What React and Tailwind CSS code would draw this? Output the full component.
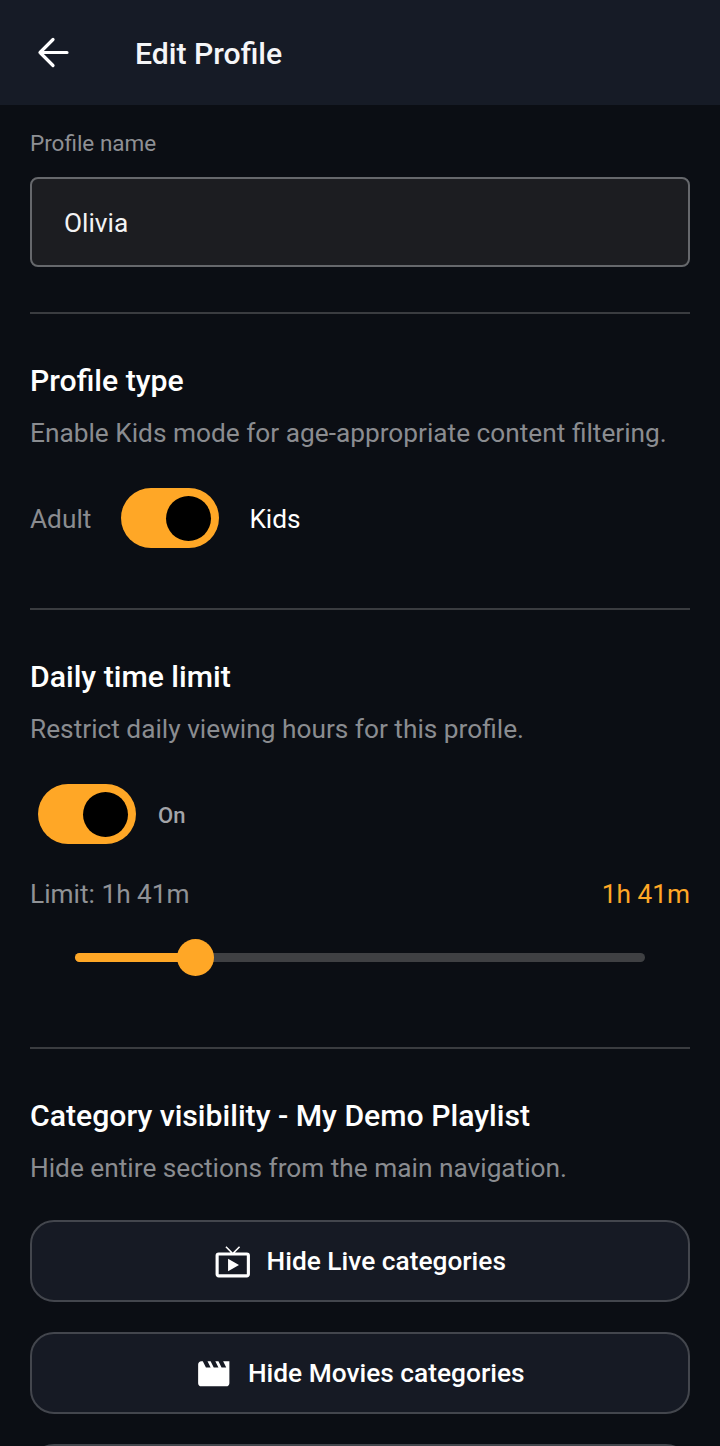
import { MdLiveTv, MdMovie } from "react-icons/md";

function Toggle() {
  return (
    <div className="flex h-[60px] w-[98px] items-center justify-end rounded-full bg-[#ffa726] pr-[8px]">
      <div className="h-[45px] w-[45px] rounded-full bg-black" />
    </div>
  );
}

function Divider() {
  return <div className="h-[2px] bg-[#3a3c40]" />;
}

function HideButton({ icon, label }) {
  return (
    <button className="flex h-[82px] w-full shrink-0 items-center justify-center gap-[15px] rounded-[24px] border-2 border-[#43464d] bg-[#161a24] pt-[2px] text-[26.3px] font-medium text-white">
      {icon}
      <span>{label}</span>
    </button>
  );
}

export default function App() {
  return (
    <div className="h-[1446px] w-[720px] overflow-hidden bg-[#0b0e14] font-['Roboto',sans-serif]">
      {/* header */}
      <div className="flex h-[105px] items-center bg-[#161b26] pl-[37px]">
        <svg width="32" height="32" viewBox="0 0 32 32" fill="none" stroke="white" strokeWidth="3.2" strokeLinecap="round" strokeLinejoin="round">
          <path d="M30 15.5H3M16 2.5L3 15.5L16 28.5" />
        </svg>
        <h1 className="ml-[66px] pt-[3px] text-[30.2px] font-medium text-[#f5f6f8]">Edit Profile</h1>
      </div>

      <div className="px-[30px]">
        {/* profile name */}
        <div className="mt-[25px] h-[28px] text-[22.5px] leading-[27px] text-[#8e9094]">Profile name</div>
        <div className="mt-[19px] flex h-[90px] items-center rounded-[8px] border-2 border-[#66686c] bg-[#1c1d21] pl-[32px] pt-[4px] text-[26.25px] text-[#f3f3f4]">
          Olivia
        </div>
        <div className="mt-[45px]">
          <Divider />
        </div>

        {/* profile type */}
        <h2 className="mt-[50px] h-[34px] text-[30.2px] font-medium leading-[34px] text-white">Profile type</h2>
        <p className="mt-[18px] h-[34px] text-[26.25px] leading-[34px] text-[#8a8c90]">
          Enable Kids mode for age-appropriate content filtering.
        </p>
        <div className="mt-[38px] flex items-center">
          <span className="pt-[4px] text-[26.25px] text-[#8a8c90]">Adult</span>
          <div className="ml-[30px]">
            <Toggle />
          </div>
          <span className="ml-[30px] pt-[4px] text-[26.25px] text-white">Kids</span>
        </div>
        <div className="mt-[60px]">
          <Divider />
        </div>

        {/* daily limit */}
        <h2 className="mt-[50px] h-[34px] text-[30.2px] font-medium leading-[34px] text-white">Daily time limit</h2>
        <p className="mt-[18px] h-[34px] text-[26.25px] leading-[34px] text-[#8a8c90]">
          Restrict daily viewing hours for this profile.
        </p>
        <div className="mt-[38px] flex items-center pl-[7.5px]">
          <Toggle />
          <span className="ml-[22.5px] pt-[2px] text-[22px] font-medium text-[#a3a5a9]">On</span>
        </div>
        <div className="mt-[19px] flex h-[60px] items-start justify-between text-[26.25px] leading-[62px]">
          <span className="text-[#909296]">Limit: 1h 41m</span>
          <span className="text-[#ffa726]">1h 41m</span>
        </div>
        <div className="mx-[45px] mt-[15px] flex h-[38px] items-center">
          <div className="relative flex h-[9px] w-full rounded-full bg-[#3f4043]">
            <div className="h-full w-[120px] rounded-full bg-[#ffa726]" />
            <div className="absolute left-[102px] top-[-14px] h-[37px] w-[37px] rounded-full bg-[#ffa726]" />
          </div>
        </div>
        <div className="mt-[71px]">
          <Divider />
        </div>

        {/* category visibility */}
        <h2 className="mt-[50px] h-[34px] text-[30.2px] font-medium leading-[34px] text-white">
          Category visibility - My Demo Playlist
        </h2>
        <p className="mt-[18px] h-[34px] text-[26.25px] leading-[34px] text-[#8a8c90]">
          Hide entire sections from the main navigation.
        </p>
        <div className="mt-[35px] flex flex-col gap-[30px]">
          <HideButton icon={<MdLiveTv size={37.5} />} label="Hide Live categories" />
          <HideButton icon={<MdMovie size={37.5} />} label="Hide Movies categories" />
          <div className="h-[82px] shrink-0 rounded-[24px] border-2 border-[#43464d] bg-[#161a24]" />
        </div>
      </div>
    </div>
  );
}
